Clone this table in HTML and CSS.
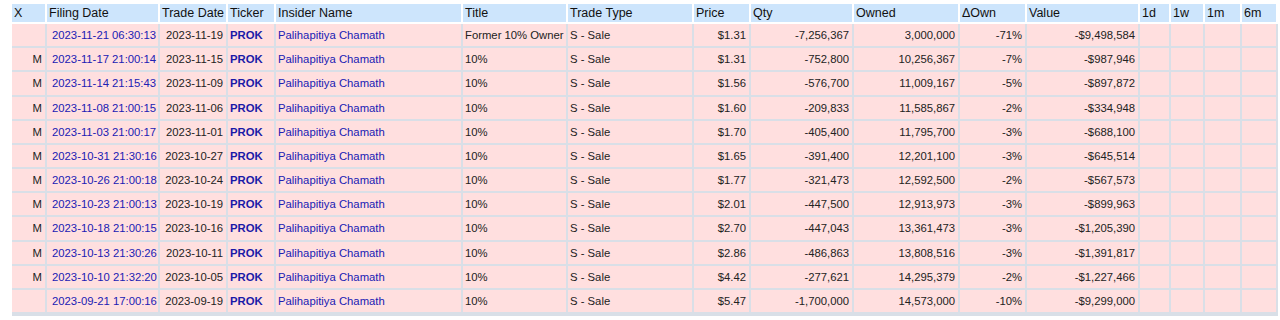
FILE: index.html
```html
<!DOCTYPE html>
<html>
<head>
<meta charset="utf-8">
<link rel="stylesheet" href="styles.css">
</head>
<body>
<div class="wrap">
<table class="tiny">
<colgroup>
<col style="width:35px"><col style="width:113px"><col style="width:68px"><col style="width:48px"><col style="width:187px"><col style="width:105px"><col style="width:126px"><col style="width:57px"><col style="width:103px"><col style="width:106px"><col style="width:67px"><col style="width:113px"><col style="width:31px"><col style="width:34px"><col style="width:37px"><col style="width:36px">
</colgroup>
<thead>
<tr><th>X</th><th>Filing Date</th><th>Trade Date</th><th>Ticker</th><th>Insider Name</th><th>Title</th><th>Trade Type</th><th>Price</th><th>Qty</th><th>Owned</th><th>ΔOwn</th><th>Value</th><th>1d</th><th>1w</th><th>1m</th><th>6m</th></tr>
</thead>
<tbody>
<tr class="sale"><td class="r"></td><td class="fd"><a>2023-11-21 06:30:13</a></td><td class="r">2023-11-19</td><td><b><a>PROK</a></b></td><td><a>Palihapitiya Chamath</a></td><td>Former 10% Owner</td><td>S - Sale</td><td class="r">$1.31</td><td class="r">-7,256,367</td><td class="r">3,000,000</td><td class="r">-71%</td><td class="r">-$9,498,584</td><td></td><td></td><td></td><td></td></tr>
<tr class="sale"><td class="r">M</td><td class="fd"><a>2023-11-17 21:00:14</a></td><td class="r">2023-11-15</td><td><b><a>PROK</a></b></td><td><a>Palihapitiya Chamath</a></td><td>10%</td><td>S - Sale</td><td class="r">$1.31</td><td class="r">-752,800</td><td class="r">10,256,367</td><td class="r">-7%</td><td class="r">-$987,946</td><td></td><td></td><td></td><td></td></tr>
<tr class="sale"><td class="r">M</td><td class="fd"><a>2023-11-14 21:15:43</a></td><td class="r">2023-11-09</td><td><b><a>PROK</a></b></td><td><a>Palihapitiya Chamath</a></td><td>10%</td><td>S - Sale</td><td class="r">$1.56</td><td class="r">-576,700</td><td class="r">11,009,167</td><td class="r">-5%</td><td class="r">-$897,872</td><td></td><td></td><td></td><td></td></tr>
<tr class="sale"><td class="r">M</td><td class="fd"><a>2023-11-08 21:00:15</a></td><td class="r">2023-11-06</td><td><b><a>PROK</a></b></td><td><a>Palihapitiya Chamath</a></td><td>10%</td><td>S - Sale</td><td class="r">$1.60</td><td class="r">-209,833</td><td class="r">11,585,867</td><td class="r">-2%</td><td class="r">-$334,948</td><td></td><td></td><td></td><td></td></tr>
<tr class="sale"><td class="r">M</td><td class="fd"><a>2023-11-03 21:00:17</a></td><td class="r">2023-11-01</td><td><b><a>PROK</a></b></td><td><a>Palihapitiya Chamath</a></td><td>10%</td><td>S - Sale</td><td class="r">$1.70</td><td class="r">-405,400</td><td class="r">11,795,700</td><td class="r">-3%</td><td class="r">-$688,100</td><td></td><td></td><td></td><td></td></tr>
<tr class="sale"><td class="r">M</td><td class="fd"><a>2023-10-31 21:30:16</a></td><td class="r">2023-10-27</td><td><b><a>PROK</a></b></td><td><a>Palihapitiya Chamath</a></td><td>10%</td><td>S - Sale</td><td class="r">$1.65</td><td class="r">-391,400</td><td class="r">12,201,100</td><td class="r">-3%</td><td class="r">-$645,514</td><td></td><td></td><td></td><td></td></tr>
<tr class="sale"><td class="r">M</td><td class="fd"><a>2023-10-26 21:00:18</a></td><td class="r">2023-10-24</td><td><b><a>PROK</a></b></td><td><a>Palihapitiya Chamath</a></td><td>10%</td><td>S - Sale</td><td class="r">$1.77</td><td class="r">-321,473</td><td class="r">12,592,500</td><td class="r">-2%</td><td class="r">-$567,573</td><td></td><td></td><td></td><td></td></tr>
<tr class="sale"><td class="r">M</td><td class="fd"><a>2023-10-23 21:00:13</a></td><td class="r">2023-10-19</td><td><b><a>PROK</a></b></td><td><a>Palihapitiya Chamath</a></td><td>10%</td><td>S - Sale</td><td class="r">$2.01</td><td class="r">-447,500</td><td class="r">12,913,973</td><td class="r">-3%</td><td class="r">-$899,963</td><td></td><td></td><td></td><td></td></tr>
<tr class="sale"><td class="r">M</td><td class="fd"><a>2023-10-18 21:00:15</a></td><td class="r">2023-10-16</td><td><b><a>PROK</a></b></td><td><a>Palihapitiya Chamath</a></td><td>10%</td><td>S - Sale</td><td class="r">$2.70</td><td class="r">-447,043</td><td class="r">13,361,473</td><td class="r">-3%</td><td class="r">-$1,205,390</td><td></td><td></td><td></td><td></td></tr>
<tr class="sale"><td class="r">M</td><td class="fd"><a>2023-10-13 21:30:26</a></td><td class="r">2023-10-11</td><td><b><a>PROK</a></b></td><td><a>Palihapitiya Chamath</a></td><td>10%</td><td>S - Sale</td><td class="r">$2.86</td><td class="r">-486,863</td><td class="r">13,808,516</td><td class="r">-3%</td><td class="r">-$1,391,817</td><td></td><td></td><td></td><td></td></tr>
<tr class="sale"><td class="r">M</td><td class="fd"><a>2023-10-10 21:32:20</a></td><td class="r">2023-10-05</td><td><b><a>PROK</a></b></td><td><a>Palihapitiya Chamath</a></td><td>10%</td><td>S - Sale</td><td class="r">$4.42</td><td class="r">-277,621</td><td class="r">14,295,379</td><td class="r">-2%</td><td class="r">-$1,227,466</td><td></td><td></td><td></td><td></td></tr>
<tr class="sale"><td class="r"></td><td class="fd"><a>2023-09-21 17:00:16</a></td><td class="r">2023-09-19</td><td><b><a>PROK</a></b></td><td><a>Palihapitiya Chamath</a></td><td>10%</td><td>S - Sale</td><td class="r">$5.47</td><td class="r">-1,700,000</td><td class="r">14,573,000</td><td class="r">-10%</td><td class="r">-$9,299,000</td><td></td><td></td><td></td><td></td></tr>
<tr class="buy"><td class="r"></td><td class="fd"></td><td></td><td></td><td></td><td></td><td></td><td></td><td></td><td></td><td></td><td></td><td></td><td></td><td></td><td></td></tr>
</tbody>
</table>
</div>
</body>
</html>
```
FILE: styles.css
```css
html, body {
  margin: 0;
  padding: 0;
  background: #ffffff;
}
body {
  font-family: "Liberation Sans", Arial, sans-serif;
  color: #222;
}
.wrap {
  padding: 4px 0 0 12px;
}
.tiny {
  border-collapse: separate;
  border-spacing: 0;
  table-layout: fixed;
  width: 1266px;
}
.tiny th {
  background: #cde5fc;
  font-weight: normal;
  font-size: 12.5px;
  text-align: left;
  line-height: 18px;
  padding: 0 2px;
  border-right: 2px solid #ffffff;
  border-bottom: 2px solid #ffffff;
  white-space: nowrap;
  overflow: hidden;
  color: #111;
}
.tiny td {
  font-size: 11.3px;
  line-height: 22.17px;
  padding: 0 3px 0 2px;
  border-right: 2px solid #d9dfe7;
  border-bottom: 2px solid #d9dfe7;
  white-space: nowrap;
  overflow: hidden;
  color: #222;
}
.tiny tr.sale td {
  background: #ffdfdf;
}
.tiny tr.buy td {
  background: #eefff0;
}
.tiny td.r {
  text-align: right;
}
.tiny td.fd {
  padding-left: 5px;
}
.tiny a {
  color: #2020b4;
  text-decoration: none;
}
.tiny b a {
  color: #1a1aa8;
}
```
